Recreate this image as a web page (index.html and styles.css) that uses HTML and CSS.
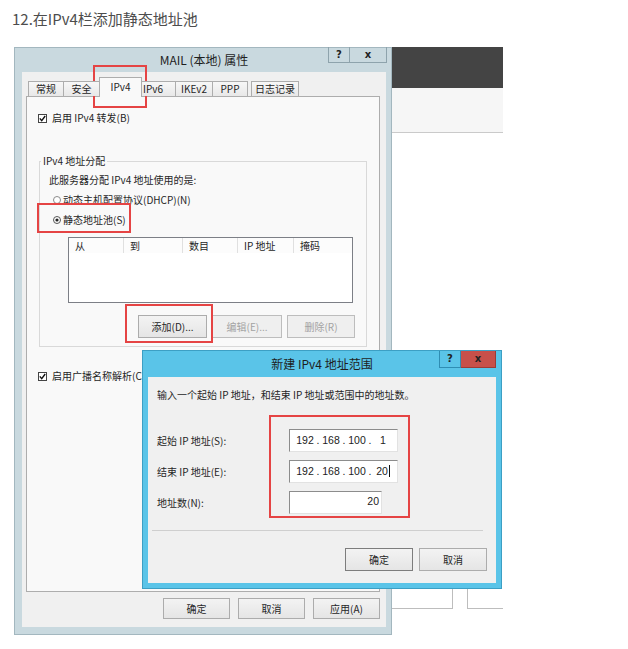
FILE: index.html
```html
<!DOCTYPE html>
<html>

<head>
  <meta charset="utf-8">
  <title>在IPv4栏添加静态地址池</title>
  <link rel="stylesheet" href="styles.css">
</head>

<body>
  <p class="step">12.在IPv4栏添加静态地址池</p>

  <div class="shot">
    <!-- MAIL 属性窗口 -->
    <div class="win">
      <div class="caption">
        <span class="caption-title">MAIL (本地) 属性</span>
        <div class="caption-btns">
          <span class="cbtn help">?</span>
          <span class="cbtn close">x</span>
        </div>
      </div>
      <div class="win-body">
        <div class="tabs">
          <span class="tab t-gen">常规</span>
          <span class="tab t-sec">安全</span>
          <span class="tab t-v4 on">IPv4</span>
          <span class="tab t-v6">IPv6</span>
          <span class="tab t-ike">IKEv2</span>
          <span class="tab t-ppp">PPP</span>
          <span class="tab t-log">日志记录</span>
        </div>
        <div class="panel">
          <label class="check">
            <svg width="9" height="9" viewBox="0 0 9 9"><rect x="0.5" y="0.5" width="8" height="8" fill="#fff" stroke="#444"/><path d="M1.8 4.4 L3.7 6.6 L7.2 2" fill="none" stroke="#111" stroke-width="1.4"/></svg>
            启用 IPv4 转发(B)
          </label>
          <fieldset class="group">
            <legend>IPv4 地址分配</legend>
            <p class="grp-text">此服务器分配 IPv4 地址使用的是:</p>
            <div class="opt">
              <svg width="8" height="8" viewBox="0 0 8 8"><circle cx="4" cy="4" r="3.5" fill="#fff" stroke="#8a8a8a"/></svg>
              动态主机配置协议(DHCP)(N)
            </div>
            <div class="opt">
              <svg width="8" height="8" viewBox="0 0 8 8"><circle cx="4" cy="4" r="3.5" fill="#fff" stroke="#555"/><circle cx="4" cy="4" r="1.6" fill="#222"/></svg>
              静态地址池(S)
            </div>
            <div class="lv">
              <div class="lv-head">
                <span class="col c1">从</span>
                <span class="col c2">到</span>
                <span class="col c3">数目</span>
                <span class="col c4">IP 地址</span>
                <span class="col c5">掩码</span>
              </div>
            </div>
            <div class="btn-row">
              <span class="btn b-add">添加(D)...</span>
              <span class="btn b-edit off">编辑(E)...</span>
              <span class="btn b-del off">删除(R)</span>
            </div>
          </fieldset>
          <label class="check check-nb">
            <svg width="9" height="9" viewBox="0 0 9 9"><rect x="0.5" y="0.5" width="8" height="8" fill="#fff" stroke="#444"/><path d="M1.8 4.4 L3.7 6.6 L7.2 2" fill="none" stroke="#111" stroke-width="1.4"/></svg>
            启用广播名称解析(C)
          </label>
        </div>
        <div class="btn-row foot">
          <span class="btn">确定</span>
          <span class="btn">取消</span>
          <span class="btn">应用(A)</span>
        </div>
      </div>
    </div>

    <!-- 背后的桌面 -->
    <div class="desk">
      <div class="desk-bar"></div>
      <div class="desk-strip"></div>
      <div class="desk-fill">
        <span class="tile tile-a"></span>
        <span class="tile tile-b"></span>
      </div>
    </div>

    <!-- 新建地址范围对话框 -->
    <div class="dlg">
      <div class="caption dlg-caption">
        <span class="caption-title">新建 IPv4 地址范围</span>
        <div class="caption-btns">
          <span class="cbtn help">?</span>
          <span class="cbtn close">x</span>
        </div>
      </div>
      <div class="dlg-body">
        <p class="intro">输入一个起始 IP 地址，和结束 IP 地址或范围中的地址数。</p>
        <div class="range">
          <span>起始 IP 地址(S):</span>
          <div class="ip">
            <span class="seg">192</span><span class="dot">.</span><span class="seg">168</span><span class="dot">.</span><span class="seg">100</span><span class="dot">.</span><span class="seg">1</span>
          </div>
          <span>结束 IP 地址(E):</span>
          <div class="ip">
            <span class="seg">192</span><span class="dot">.</span><span class="seg">168</span><span class="dot">.</span><span class="seg">100</span><span class="dot">.</span><span class="seg">20<i class="caret"></i></span>
          </div>
          <span>地址数(N):</span>
          <div class="ip num">20</div>
        </div>
        <div class="rule"></div>
        <div class="btn-row dlg-btns">
          <span class="btn default">确定</span>
          <span class="btn">取消</span>
        </div>
      </div>
    </div>

    <!-- 红框标注 -->
    <span class="mark m-tab"></span>
    <span class="mark m-pool"></span>
    <span class="mark m-add"></span>
    <span class="mark m-range"></span>
  </div>
</body>

</html>
```

FILE: styles.css
```css
* {
  box-sizing: border-box;
}

body {
  margin: 0;
  background: #fff;
  font-family: "Noto Sans CJK SC", sans-serif;
}

.step {
  margin: 0;
  padding: 9px 12px 0;
  font-size: 15px;
  line-height: 20px;
  color: #4d4d4d;
}

.shot {
  position: relative;
  display: flex;
  width: 489px;
  height: 588px;
  margin: 18px 0 0 14px;
  font-size: 10px;
  line-height: 14px;
  color: #262626;
}

/* window frame */
.win {
  display: flex;
  flex-direction: column;
  width: 378px;
  padding: 0 5px 7px 7px;
  background: #c9d9df;
  border: 1px solid #a3b7bf;
}

.caption {
  display: grid;
  grid-template-columns: 1fr auto 1fr;
  height: 24px;
}

.caption-title {
  grid-column: 2;
  align-self: center;
  font-size: 12px;
  color: #1e1e1e;
  white-space: nowrap;
}

.caption-btns {
  grid-column: 3;
  justify-self: end;
  display: flex;
  margin: -1px -1px 0 0;
}

.cbtn {
  display: flex;
  align-items: center;
  justify-content: center;
  height: 16px;
  font-family: "DejaVu Sans", sans-serif;
  font-size: 10px;
  font-weight: bold;
  color: #222;
  border: 1px solid #8ea3ac;
  border-top: 0;
}

.help {
  width: 22px;
}

.close {
  width: 37px;
  border-left: 0;
}

.win-body {
  flex: 1;
  display: flex;
  flex-direction: column;
  background: #f0f0f0;
  padding: 5px 6px 8px 4px;
}

/* tabs */
.tabs {
  position: relative;
  z-index: 1;
  display: flex;
  align-items: flex-end;
  height: 19px;
  padding-left: 2px;
}

.tab {
  height: 15px;
  margin-right: -1px;
  border: 1px solid #adadad;
  border-bottom: 0;
  background: linear-gradient(#f7f7f7, #e8e8e8);
  text-align: center;
  line-height: 13px;
  white-space: nowrap;
}

.tab.on {
  height: 20px;
  margin-bottom: -1px;
  padding-top: 2px;
  background: #f9f9f9;
}

.t-gen { width: 36px; }
.t-sec { width: 37px; }
.t-v4 { width: 43px; }
.t-v6 { width: 35px; text-align: left; padding-left: 1px; }
.t-ike { width: 38px; }
.t-ppp { width: 36px; }
.t-log { width: 48px; margin-left: 4px; }

.panel {
  height: 496px;
  padding: 14px 10px 0 11px;
  background: #f9f9f9;
  border: 1px solid #adadad;
}

.check {
  display: flex;
  align-items: center;
  gap: 5px;
  height: 14px;
}

.check-nb {
  margin-top: 22px;
}

.group {
  min-width: 0;
  margin: 30px 2px 0 1px;
  padding: 6px 11px 8px 9px;
  border: 1px solid #d9d9d9;
}

.group legend {
  margin-left: -8px;
  padding: 0 2px;
  line-height: 12px;
}

.grp-text {
  margin: 0;
}

.opt {
  display: flex;
  align-items: center;
  gap: 2px;
  height: 14px;
  margin-top: 6px;
  padding-left: 4px;
}

/* list view */
.lv {
  width: 285px;
  height: 66px;
  margin: 10px 0 0 19px;
  background: #fff;
  border: 1px solid #7c7f86;
  overflow: hidden;
}

.lv-head {
  display: flex;
  height: 15px;
  background: #fcfcfc;
}

.col {
  flex: none;
  padding-left: 6px;
  line-height: 15px;
  border-right: 1px solid #e0e0e0;
  white-space: nowrap;
}

.c1 { width: 55px; }
.c2 { width: 59px; }
.c3 { width: 55px; }
.c4 { width: 56px; }
.c5 { width: 59px; }

/* buttons */
.btn-row {
  display: flex;
  justify-content: flex-end;
  gap: 5px;
  margin-top: 12px;
}

.btn {
  display: flex;
  align-items: center;
  justify-content: center;
  width: 67px;
  height: 23px;
  border: 1px solid #acacac;
  background: linear-gradient(#f3f3f3, #e5e5e5);
  white-space: nowrap;
}

.btn.off {
  color: #a3a3a3;
  background: #efefef;
  border-color: #bdbdbd;
}

.b-add { width: 69px; }
.b-edit { width: 70px; }
.b-del { width: 68px; }

.foot {
  gap: 8px;
  margin-top: 6px;
}

.foot .btn {
  height: 21px;
}

/* desktop behind */
.desk {
  flex: 1;
  display: flex;
  flex-direction: column;
  background: #fff;
}

.desk-bar {
  height: 41px;
  background: #444;
}

.desk-strip {
  height: 45px;
  background: #f6f6f6;
  border-bottom: 1px solid #cacaca;
}

.desk-fill {
  flex: 1;
  display: flex;
  align-items: flex-end;
  justify-content: space-between;
  padding-bottom: 26px;
}

.tile {
  height: 40px;
  border-bottom: 1px solid #bdbdbd;
}

.tile-a {
  width: 61px;
  border-right: 1px solid #bdbdbd;
}

.tile-b {
  width: 36px;
  border-left: 1px solid #bdbdbd;
}

/* new range dialog */
.dlg {
  position: absolute;
  left: 128px;
  top: 303px;
  width: 360px;
  height: 239px;
  display: flex;
  flex-direction: column;
  padding: 0 5px 5px;
  background: #5ac4e8;
  border: 1px solid #3c9fc4;
}

.dlg-caption {
  height: 26px;
}

.dlg-caption .caption-btns {
  margin: 0;
}

.dlg-caption .cbtn {
  height: 17px;
  border-color: #2f8db3;
}

.dlg-caption .close {
  width: 35px;
  background: #c7504a;
  border-color: #9c3b36;
}

.dlg-body {
  flex: 1;
  padding: 11px 9px 0;
  background: #f0f0f0;
}

.intro {
  margin: 0;
  white-space: nowrap;
}

.range {
  display: grid;
  grid-template-columns: 132px auto;
  align-items: center;
  justify-items: start;
  row-gap: 8px;
  margin-top: 27px;
}

.ip {
  display: flex;
  align-items: center;
  width: 109px;
  height: 23px;
  padding: 0 0 2px 5px;
  background: #fff;
  border: 1px solid;
  border-color: #8c8c8c #e2e2e2 #e2e2e2 #8c8c8c;
  font-family: "Liberation Sans", sans-serif;
  font-size: 10.5px;
  color: #222;
}

.seg {
  width: 20px;
  text-align: center;
}

.dot {
  width: 6px;
  text-align: center;
}

.caret {
  display: inline-block;
  width: 1px;
  height: 12px;
  margin-left: 1px;
  vertical-align: -2px;
  background: #111;
}

.ip.num {
  width: 93px;
  justify-content: flex-end;
  padding: 0 2px 3px 0;
}

.rule {
  margin: 16px 4px 0 -5px;
  border-top: 1px solid #cfcfcf;
}

.dlg-btns {
  gap: 6px;
  margin-top: 17px;
}

.dlg-btns .btn {
  width: 68px;
}

.btn.default {
  border-color: #7d7d7d;
}

/* red annotations */
.mark {
  position: absolute;
  border: 2px solid #e54444;
}

.m-tab { left: 79px; top: 18px; width: 54px; height: 43px; }
.m-pool { left: 23px; top: 156px; width: 94px; height: 30px; }
.m-add { left: 111px; top: 257px; width: 88px; height: 39px; }
.m-range { left: 255px; top: 368px; width: 141px; height: 103px; }
```
